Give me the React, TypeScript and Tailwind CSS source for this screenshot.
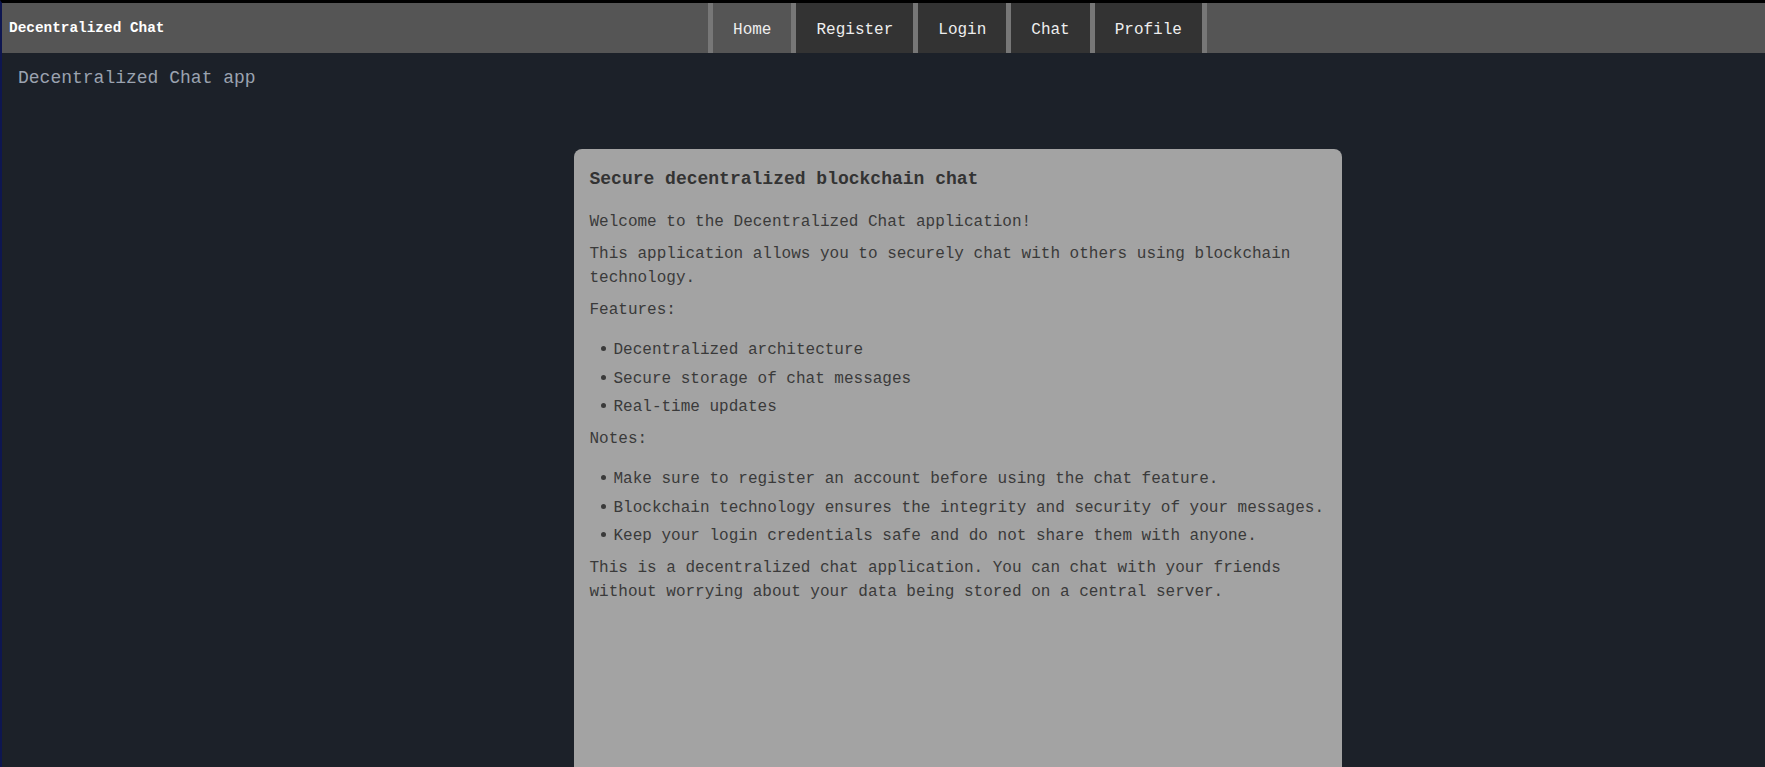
import React from "react";

const navItems = ["Home", "Register", "Login", "Chat", "Profile"];

const features = [
  "Decentralized architecture",
  "Secure storage of chat messages",
  "Real-time updates",
];

const notes = [
  "Make sure to register an account before using the chat feature.",
  "Blockchain technology ensures the integrity and security of your messages.",
  "Keep your login credentials safe and do not share them with anyone.",
];

const mono = "font-['Liberation_Mono','DejaVu_Sans_Mono',monospace]";

const BulletList = ({ items }: { items: string[] }) => (
  <ul className="mt-4 mb-2 flex flex-col gap-[4.5px] pl-[11px]">
    {items.map((item) => (
      <li key={item} className="flex items-center leading-6 whitespace-nowrap">
        <span className="w-[5px] h-[5px] rounded-full bg-[#3a3a3a] mr-[8px] mb-[3px] shrink-0" />
        {item}
      </li>
    ))}
  </ul>
);

const App = () => {
  const active = "Home";

  return (
    <div
      className={`min-h-screen bg-[#1c2129] border-t-[3px] border-black border-l-2 border-l-[#0e1650] ${mono}`}
    >
      <header className="h-[50px] bg-[#555555] flex items-stretch">
        <div className="w-[148px] shrink-0 flex items-center pl-[7px] pt-[2px] whitespace-nowrap text-[14.4px] font-bold text-white">
          Decentralized Chat
        </div>
        <div className="flex-1 flex justify-center">
          <nav className="flex border-r-[5px] border-[#777777]">
            {navItems.map((item) => (
              <a
                key={item}
                href="#"
                className={`flex items-center px-5 pt-[4px] border-l-[5px] border-[#777777] text-base text-[#eeeeee] ${
                  item === active ? "bg-[#555555]" : "bg-[#333333]"
                }`}
              >
                {item}
              </a>
            ))}
          </nav>
        </div>
      </header>

      <main>
        <h1 className="pt-[11px] px-4 text-lg leading-7 text-[#9ba3b0]">
          Decentralized Chat app
        </h1>

        <div className="pl-[148px] flex justify-center mt-[57px]">
          <div className="w-[768px] h-[640px] bg-[#a3a3a3] rounded-lg px-4 pt-4 text-base text-[#3a3a3a]">
            <h2 className="text-lg leading-7 font-bold text-[#333333] mb-[17px]">
              Secure decentralized blockchain chat
            </h2>
            <p className="leading-6 my-2">
              Welcome to the Decentralized Chat application!
            </p>
            <p className="leading-6 my-2">
              This application allows you to securely chat with others using
              blockchain technology.
            </p>
            <p className="leading-6 my-2">Features:</p>
            <BulletList items={features} />
            <p className="leading-6 my-2">Notes:</p>
            <BulletList items={notes} />
            <p className="leading-6 my-2">
              This is a decentralized chat application. You can chat with your
              friends without worrying about your data being stored on a central
              server.
            </p>
          </div>
        </div>
      </main>
    </div>
  );
};

export default App;
